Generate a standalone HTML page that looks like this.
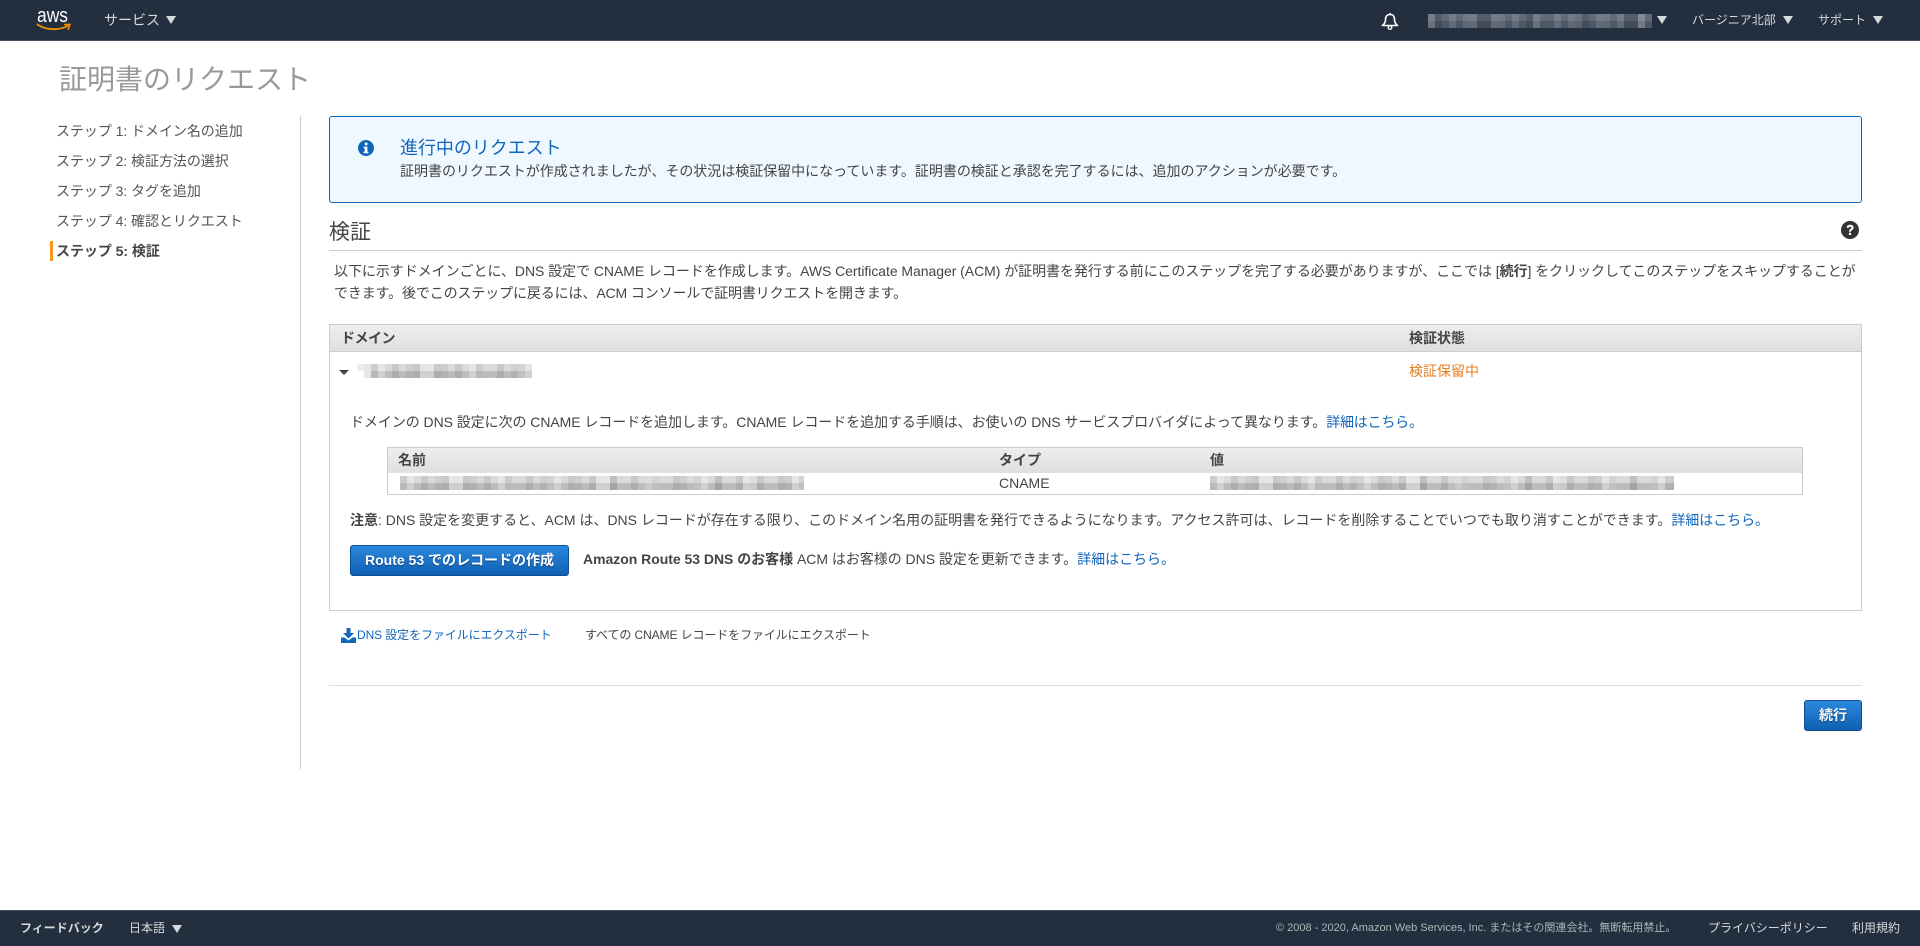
<!DOCTYPE html>
<html lang="ja"><head><meta charset="utf-8"><title>証明書のリクエスト</title>
<style>
html,body{margin:0;padding:0;width:1920px;height:946px;overflow:hidden;background:#fff}
body{position:relative;font-family:"Liberation Sans","Noto Sans CJK JP",sans-serif;color:#444;font-size:14px}
.a{position:absolute;white-space:nowrap;line-height:20px;height:20px}
.h{position:absolute;left:0;top:0;width:1920px;height:40px;background:#232f3e;border-bottom:1px solid #444f5c}
.f{position:absolute;left:0;top:910px;width:1920px;height:36px;background:#232f3e;border-top:1px solid #444f5c;box-sizing:border-box}
.w{color:#d5dbdb;font-size:12px}
.tri{position:absolute;width:0;height:0;border-left:5px solid transparent;border-right:5px solid transparent;border-top:8px solid #d5dbdb}
.s{color:#555;font-size:14px;left:56px;letter-spacing:-.05px}
.l{color:#1166bb}
.b{font-weight:bold}
.thead{position:absolute;background:linear-gradient(#eeeeee,#dfdfdf)}
.btn{position:absolute;box-sizing:border-box;border:1px solid #0b4f96;border-radius:3px;background:linear-gradient(#2b88dd,#0f60b2);color:#fff;font-weight:bold;text-align:center;font-size:14px;text-shadow:0 1px 1px #0a3f7a}
.m1{position:absolute;background-image:repeating-linear-gradient(90deg,rgba(0,0,0,.08) 0 7px,transparent 7px 21px),repeating-linear-gradient(90deg,rgba(255,255,255,.3) 0 14px,transparent 14px 49px),repeating-linear-gradient(90deg,rgba(0,0,0,.05) 0 7px,transparent 7px 35px),linear-gradient(#dadada 0 50%,#bcbcbc 50% 100%)}
.m2{position:absolute;background-image:repeating-linear-gradient(90deg,rgba(255,255,255,.12) 0 7px,transparent 7px 21px),repeating-linear-gradient(90deg,rgba(0,0,0,.12) 0 14px,transparent 14px 49px),repeating-linear-gradient(90deg,rgba(255,255,255,.1) 0 7px,transparent 7px 35px),linear-gradient(#5f6b78 0 50%,#4c5865 50% 100%)}
</style></head><body>

<div class="h"></div>
<svg class="a" style="left:34px;top:7px;width:40px;height:28px;line-height:0" viewBox="0 0 40 28">
<text x="3" y="15" font-family="Liberation Sans" font-size="20" fill="#fff" textLength="31" lengthAdjust="spacingAndGlyphs">aws</text>
<path d="M3.5 17.5C12 23.5 25 23.5 33.5 19" fill="none" stroke="#f29100" stroke-width="1.8" stroke-linecap="round"/>
<path d="M30 17.6L36 17.4L34 22.8" fill="none" stroke="#f29100" stroke-width="1.6" stroke-linejoin="round"/>
</svg>
<div class="a w" style="left:104px;top:10px;font-size:14px">サービス</div>
<div class="tri" style="left:166px;top:16px"></div>
<svg class="a" style="left:1381px;top:11px;width:18px;height:20px" viewBox="0 0 18 20">
<path d="M9 2V3.5M9 3.5C5.5 3.5 4.5 6 4.5 8.5C4.5 11.5 3.5 12.5 1.5 14.5H16.5C14.5 12.5 13.5 11.5 13.5 8.5C13.5 6 12.5 3.5 9 3.5Z" fill="none" stroke="#fff" stroke-width="1.6" stroke-linejoin="round"/>
<circle cx="9" cy="16.5" r="1.8" fill="none" stroke="#fff" stroke-width="1.4"/>
</svg>
<div class="m2" style="left:1428px;top:14px;width:224px;height:14px"></div>
<div class="tri" style="left:1657px;top:16px"></div>
<div class="a w" style="left:1692px;top:10px">バージニア北部</div>
<div class="tri" style="left:1783px;top:16px"></div>
<div class="a w" style="left:1818px;top:10px">サポート</div>
<div class="tri" style="left:1873px;top:16px"></div>

<div class="a" style="left:59px;top:60px;height:40px;line-height:40px;font-size:28px;color:#999">証明書のリクエスト</div>

<div class="a s" style="top:121px">ステップ 1: ドメイン名の追加</div>
<div class="a s" style="top:151px">ステップ 2: 検証方法の選択</div>
<div class="a s" style="top:181px">ステップ 3: タグを追加</div>
<div class="a s" style="top:211px">ステップ 4: 確認とリクエスト</div>
<div class="a s b" style="top:241px;color:#444">ステップ 5: 検証</div>
<div style="position:absolute;left:50px;top:241px;width:3px;height:20px;background:#f7981d"></div>
<div style="position:absolute;left:300px;top:116px;width:1px;height:653px;background:#ccc"></div>

<div style="position:absolute;left:329px;top:116px;width:1533px;height:87px;box-sizing:border-box;border:1px solid #0a66bf;border-radius:3px;background:#f0f8ff"></div>
<svg class="a" style="left:358px;top:140px;width:16px;height:16px" viewBox="0 0 16 16">
<circle cx="8" cy="8" r="8" fill="#0e66bb"/><rect x="6.8" y="2.6" width="2.6" height="2.6" fill="#fff"/><path d="M5.6 6.6H9.4V11.6H10.4V13.2H5.6V11.6H6.7V8.2H5.6Z" fill="#fff"/>
</svg>
<div class="a l" style="left:400px;top:138px;font-size:18px;letter-spacing:-.05px">進行中のリクエスト</div>
<div class="a" style="left:400px;top:161px;font-size:14px;letter-spacing:-.02px">証明書のリクエストが作成されましたが、その状況は検証保留中になっています。証明書の検証と承認を完了するには、追加のアクションが必要です。</div>

<div class="a" style="left:329px;top:218px;height:30px;line-height:30px;font-size:21px">検証</div>
<div style="position:absolute;left:329px;top:250px;width:1533px;height:1px;background:#ccc"></div>
<svg class="a" style="left:1841px;top:221px;width:18px;height:18px" viewBox="0 0 18 18">
<circle cx="9" cy="9" r="9" fill="#333"/><path d="M5.6 6.8C5.7 4.8 7.2 3.7 9.1 3.7C11.2 3.7 12.6 4.9 12.6 6.6C12.6 8.1 11.6 8.7 10.7 9.3C10.1 9.7 10 10 10 10.7H8C8 9.4 8.3 8.7 9.3 8C10 7.5 10.4 7.2 10.4 6.7C10.4 6 9.9 5.6 9.1 5.6C8.2 5.6 7.8 6.1 7.7 6.9Z" fill="#fff"/><rect x="7.9" y="11.8" width="2.2" height="2.2" fill="#fff"/>
</svg>
<div class="a" style="left:334px;top:261px;letter-spacing:-.05px">以下に示すドメインごとに、DNS 設定で CNAME レコードを作成します。AWS Certificate Manager (ACM) が証明書を発行する前にこのステップを完了する必要がありますが、ここでは [<b>続行</b>] をクリックしてこのステップをスキップすることが</div>
<div class="a" style="left:334px;top:283px;letter-spacing:-.12px">できます。後でこのステップに戻るには、ACM コンソールで証明書リクエストを開きます。</div>

<div style="position:absolute;left:329px;top:324px;width:1533px;height:287px;box-sizing:border-box;border:1px solid #ccc"></div>
<div class="thead" style="left:330px;top:325px;width:1531px;height:26px;border-bottom:1px solid #ccc"></div>
<div class="a b" style="left:341px;top:328px;font-size:14px;letter-spacing:-.5px">ドメイン</div>
<div class="a b" style="left:1409px;top:328px;font-size:14px">検証状態</div>
<div class="tri" style="left:339px;top:370px;border-left-width:5px;border-right-width:5px;border-top:5px solid #444"></div>
<div style="position:absolute;left:357px;top:364px;width:7px;height:7px;background:#eee"></div>
<div style="position:absolute;left:364px;top:364px;width:7px;height:14px;background:#e6e6e6"></div>
<div class="m1" style="left:371px;top:364px;width:161px;height:14px"></div>
<div class="a" style="left:1409px;top:361px;font-size:14px;color:#e67e22">検証保留中</div>

<div class="a" style="left:350px;top:412px;letter-spacing:-.06px">ドメインの DNS 設定に次の CNAME レコードを追加します。CNAME レコードを追加する手順は、お使いの DNS サービスプロバイダによって異なります。<span class="l" style="letter-spacing:-.2px">詳細はこちら。</span></div>

<div style="position:absolute;left:387px;top:447px;width:1416px;height:48px;box-sizing:border-box;border:1px solid #ccc"></div>
<div class="thead" style="left:388px;top:448px;width:1414px;height:25px"></div>
<div class="a b" style="left:398px;top:450px;font-size:14px">名前</div>
<div class="a b" style="left:999px;top:450px;font-size:14px">タイプ</div>
<div class="a b" style="left:1210px;top:450px;font-size:14px">値</div>
<div class="m1" style="left:400px;top:476px;width:404px;height:14px"></div>
<div class="a" style="left:999px;top:473px">CNAME</div>
<div class="m1" style="left:1210px;top:476px;width:464px;height:14px"></div>

<div class="a" style="left:350px;top:510px;letter-spacing:-.01px"><b>注意</b>: DNS 設定を変更すると、ACM は、DNS レコードが存在する限り、このドメイン名用の証明書を発行できるようになります。アクセス許可は、レコードを削除することでいつでも取り消すことができます。<span class="l" style="letter-spacing:-.05px">詳細はこちら。</span></div>

<div class="btn" style="left:350px;top:545px;width:219px;height:31px;line-height:29px">Route 53 でのレコードの作成</div>
<div class="a" style="left:583px;top:549px;letter-spacing:-.03px"><b>Amazon Route 53 DNS のお客様</b> ACM はお客様の DNS 設定を更新できます。<span class="l">詳細はこちら。</span></div>

<svg class="a" style="left:341px;top:628px;width:15px;height:15px" viewBox="0 0 15 15">
<path d="M5.5 0H9.5V5H13L7.5 10.5L2 5H5.5Z" fill="#1166bb"/><path d="M0 9.5H3.5L7.5 12.5L11.5 9.5H15V15H0Z" fill="#1166bb"/>
</svg>
<div class="a l" style="left:357px;top:625px;font-size:12px;letter-spacing:-.1px">DNS 設定をファイルにエクスポート</div>
<div class="a" style="left:585px;top:625px;font-size:12px;letter-spacing:-.1px">すべての CNAME レコードをファイルにエクスポート</div>

<div style="position:absolute;left:329px;top:685px;width:1533px;height:1px;background:#ddd"></div>
<div class="btn" style="left:1804px;top:700px;width:58px;height:31px;line-height:29px">続行</div>

<div class="f"></div>
<div class="a b" style="left:20px;top:918px;font-size:12px;color:#d5dbdb">フィードバック</div>
<div class="a" style="left:129px;top:918px;font-size:12px;color:#d5dbdb">日本語</div>
<div class="tri" style="left:172px;top:925px"></div>
<div class="a" style="left:1276px;top:918px;font-size:11px;color:#aab7b8">© 2008 - 2020, Amazon Web Services, Inc. またはその関連会社。無断転用禁止。</div>
<div class="a" style="left:1708px;top:918px;font-size:12px;color:#d5dbdb">プライバシーポリシー</div>
<div class="a" style="left:1852px;top:918px;font-size:12px;color:#d5dbdb">利用規約</div>
</body></html>
